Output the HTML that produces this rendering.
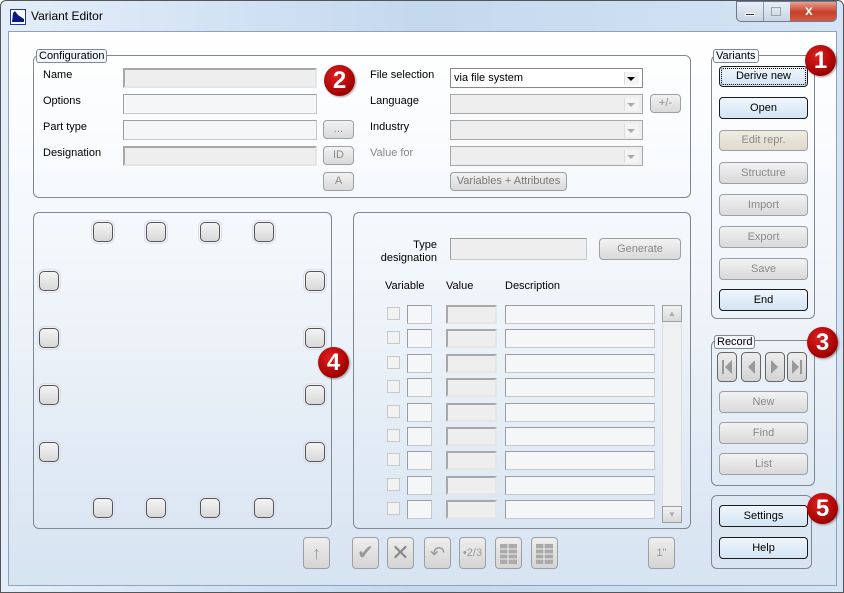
<!DOCTYPE html>
<html><head><meta charset="utf-8"><style>
*{box-sizing:border-box;margin:0;padding:0}
body{width:844px;height:593px;overflow:hidden;font-family:"Liberation Sans",sans-serif;font-size:11px;color:#000;background:#fff;position:relative}
.a{position:absolute}
#frame{left:0;top:0;width:844px;height:593px;background:linear-gradient(90deg,#e4eefa,#c4d8ee 50%,#d4e4f4);border:1px solid #555;border-radius:6px 6px 0 0}
#client{left:8px;top:31px;width:829px;height:555px;border:1px solid #8ea2bb;background:linear-gradient(#ffffff 0%,#f3f7fb 40%,#d6e3f1 100%)}
.grp{position:absolute;border:1px solid #7f8790;border-radius:6px}
.lg{position:absolute;background:#f4f7fb;border:1px solid #7f8790;border-radius:3px;padding:0 2px;font-size:11px;line-height:12px}
.lbl{position:absolute;font-size:11px}
.in{position:absolute;height:20px;border:1px solid #c4c8cc;border-top-color:#9a9ea3;border-left-color:#9a9ea3;background:#f4f6f8}
.ing{background:#eeeeee;border:2px solid #a8a8a8;border-right-color:#e6e6e6;border-bottom-color:#e6e6e6}
.btn{position:absolute;border:1px solid #9aa0a6;border-radius:4px;background:linear-gradient(#f2f2f2,#d9d9d9);color:#8a8a8a;text-align:center;font-size:11px}
.btna{border-color:#1a1a1a;background:linear-gradient(#f0f6fc,#d3e4f4);color:#000}
.sel{position:absolute;height:20px;border:1px solid #a8a8a8;background:#eeeeee}
.sel:after{content:"";position:absolute;right:3px;top:3px;width:14px;height:13px;background:#f4f4f4;border-left:1px solid #ddd}
.sel i{position:absolute;right:7px;top:8px;width:0;height:0;border-left:4px solid transparent;border-right:4px solid transparent;border-top:4px solid #aaa;z-index:2}
.badge{position:absolute;width:31px;height:31px;border-radius:50%;background:radial-gradient(circle at 40% 35%,#e02020,#a00000 70%,#700000);color:#fff;font-weight:bold;font-size:24px;text-align:center;line-height:31px;box-shadow:1px 1px 2px rgba(0,0,0,.4)}
.sq{position:absolute;width:20px;height:20px;border:1px solid #555;border-radius:5px;background:linear-gradient(#f4f4f4,#d8d8d8);outline:1px solid #dde;outline-offset:1px}
.cb{position:absolute;width:13px;height:13px;border:1px solid #c8c8c8;background:#f2f2f2}
.tb{position:absolute;width:27px;height:32px;border:1px solid #9aa0a6;border-radius:4px;background:linear-gradient(#eeeeee,#d4d4d4);color:#9a9a9a;text-align:center;font-size:12px;line-height:30px}
</style></head><body>
<div id="frame" class="a"></div>
<svg class="a" style="left:10px;top:9px" width="16" height="16"><rect x="0.5" y="0.5" width="15" height="15" fill="#fff" stroke="#1a3aa0"/><path d="M2 13 L14 13 L14 10 L8 6 L5 2 L3 4 Z" fill="#0a1a80"/></svg>
<div class="a" style="left:31px;top:9px;font-size:12px">Variant Editor</div>
<div class="a" style="left:736px;top:1px;width:101px;height:21px;border:1px solid #6b7a90;border-radius:0 0 5px 5px;background:linear-gradient(#e8eef6,#c8d4e4);overflow:hidden">
<div class="a" style="left:26px;top:0;width:1px;height:20px;background:#8899aa"></div>
<div class="a" style="left:53px;top:0;width:47px;height:20px;background:linear-gradient(#e8a090,#c8402a 50%,#d0604a)"></div>
<div class="a" style="left:8px;top:11px;width:10px;height:3px;background:#333;border:1px solid #fff"></div>
<div class="a" style="left:34px;top:5px;width:10px;height:9px;border:1px solid #9aa"></div>
<div class="a" style="left:68px;top:0px;color:#fff;font-weight:bold;font-size:14px">x</div>
</div>
<div id="client" class="a"></div>

<div class="grp" style="left:33px;top:55px;width:658px;height:143px"></div>
<div class="lg" style="left:36px;top:49px">Configuration</div>
<div class="lbl" style="left:43px;top:69px">Name</div>
<div class="lbl" style="left:43px;top:95px">Options</div>
<div class="lbl" style="left:43px;top:121px">Part type</div>
<div class="lbl" style="left:43px;top:147px">Designation</div>
<div class="in ing" style="left:123px;top:68px;width:194px"></div>
<div class="in" style="left:123px;top:94px;width:194px"></div>
<div class="in" style="left:123px;top:120px;width:194px"></div>
<div class="in ing" style="left:123px;top:146px;width:194px"></div>
<div class="btn" style="left:323px;top:120px;width:31px;height:19px;line-height:17px">...</div>
<div class="btn" style="left:323px;top:146px;width:31px;height:19px;line-height:17px">ID</div>
<div class="btn" style="left:323px;top:172px;width:31px;height:19px;line-height:17px">A</div>
<div class="badge" style="left:324px;top:65px">2</div>
<div class="lbl" style="left:370px;top:69px">File selection</div>
<div class="lbl" style="left:370px;top:95px">Language</div>
<div class="lbl" style="left:370px;top:121px">Industry</div>
<div class="lbl" style="left:370px;top:147px;color:#888">Value for</div>
<div class="sel" style="left:450px;top:68px;width:193px;background:#fff;border-color:#888"><span class="a" style="left:3px;top:3px">via file system</span><i style="border-top-color:#000"></i></div>
<div class="sel" style="left:450px;top:94px;width:193px"><i></i></div>
<div class="sel" style="left:450px;top:120px;width:193px"><i></i></div>
<div class="sel" style="left:450px;top:146px;width:193px"><i></i></div>
<div class="btn" style="left:650px;top:94px;width:31px;height:19px;line-height:17px">+/-</div>
<div class="btn" style="left:450px;top:172px;width:117px;height:19px;line-height:17px;font-size:11px;color:#777">Variables + Attributes</div>

<div class="grp" style="left:711px;top:55px;width:104px;height:264px"></div>
<div class="lg" style="left:713px;top:49px">Variants</div>
<div class="btn btna" style="left:719px;top:66px;width:89px;height:21px;line-height:19px;outline:1px dotted #000;outline-offset:-3px">Derive new</div>
<div class="btn btna" style="left:719px;top:97px;width:89px;height:22px;line-height:20px">Open</div>
<div class="btn" style="left:719px;top:130px;width:89px;height:21px;line-height:19px;background:linear-gradient(#eeebe0,#dedacb)">Edit repr.</div>
<div class="btn" style="left:719px;top:162px;width:89px;height:22px;line-height:20px">Structure</div>
<div class="btn" style="left:719px;top:194px;width:89px;height:22px;line-height:20px">Import</div>
<div class="btn" style="left:719px;top:226px;width:89px;height:22px;line-height:20px">Export</div>
<div class="btn" style="left:719px;top:258px;width:89px;height:22px;line-height:20px">Save</div>
<div class="btn btna" style="left:719px;top:289px;width:89px;height:22px;line-height:20px">End</div>
<div class="badge" style="left:805px;top:45px">1</div>

<div class="grp" style="left:711px;top:340px;width:104px;height:146px"></div>
<div class="lg" style="left:714px;top:335px">Record</div>
<svg class="a" style="left:716px;top:351px" width="93" height="33">
<defs><linearGradient id="g" x1="0" y1="0" x2="0" y2="1"><stop offset="0" stop-color="#eee"/><stop offset="1" stop-color="#d2d2d2"/></linearGradient></defs>
<g fill="url(#g)" stroke="#666"><rect x="1.5" y="1.5" width="19" height="29" rx="4"/><rect x="25.5" y="1.5" width="19" height="29" rx="4"/><rect x="49.5" y="1.5" width="19" height="29" rx="4"/><rect x="71.5" y="1.5" width="19" height="29" rx="4"/></g>
<g fill="#999"><rect x="6" y="9" width="2" height="14"/><path d="M16 9 L9 16 L16 23Z"/><path d="M39 9 L32 16 L39 23Z"/><path d="M55 9 L62 16 L55 23Z"/><path d="M76 9 L83 16 L76 23Z"/><rect x="84" y="9" width="2" height="14"/></g></svg>
<div class="btn" style="left:719px;top:391px;width:89px;height:22px;line-height:20px">New</div>
<div class="btn" style="left:719px;top:422px;width:89px;height:22px;line-height:20px">Find</div>
<div class="btn" style="left:719px;top:453px;width:89px;height:22px;line-height:20px">List</div>
<div class="badge" style="left:807px;top:327px">3</div>

<div class="grp" style="left:711px;top:495px;width:101px;height:74px"></div>
<div class="btn btna" style="left:719px;top:505px;width:89px;height:22px;line-height:20px">Settings</div>
<div class="btn btna" style="left:719px;top:537px;width:89px;height:22px;line-height:20px">Help</div>
<div class="badge" style="left:807px;top:493px">5</div>

<div class="grp" style="left:33px;top:212px;width:299px;height:317px"></div>
<div class="sq" style="left:93px;top:222px"></div><div class="sq" style="left:146px;top:222px"></div><div class="sq" style="left:200px;top:222px"></div><div class="sq" style="left:254px;top:222px"></div>
<div class="sq" style="left:93px;top:498px"></div><div class="sq" style="left:146px;top:498px"></div><div class="sq" style="left:200px;top:498px"></div><div class="sq" style="left:254px;top:498px"></div>
<div class="sq" style="left:39px;top:271px"></div><div class="sq" style="left:39px;top:328px"></div><div class="sq" style="left:39px;top:385px"></div><div class="sq" style="left:39px;top:442px"></div>
<div class="sq" style="left:305px;top:271px"></div><div class="sq" style="left:305px;top:328px"></div><div class="sq" style="left:305px;top:385px"></div><div class="sq" style="left:305px;top:442px"></div>
<div class="badge" style="left:318px;top:347px">4</div>

<div class="grp" style="left:353px;top:212px;width:338px;height:317px"></div>
<div class="lbl" style="left:370px;top:239px;width:67px;text-align:right;line-height:13px">Type<br>designation</div>
<div class="in" style="left:450px;top:238px;width:137px;height:22px;background:#eeeeee"></div>
<div class="btn" style="left:599px;top:238px;width:82px;height:22px;line-height:20px">Generate</div>
<div class="lbl" style="left:385px;top:280px">Variable</div>
<div class="lbl" style="left:446px;top:280px">Value</div>
<div class="lbl" style="left:505px;top:280px">Description</div>
<div class="a" style="left:662px;top:305px;width:20px;height:218px;background:#eef0f2;border:1px solid #ddd"></div>
<div class="btn" style="left:662px;top:305px;width:20px;height:17px;border-radius:0;color:#aaa;font-size:8px;line-height:15px">▲</div>
<div class="btn" style="left:662px;top:506px;width:20px;height:17px;border-radius:0;color:#aaa;font-size:8px;line-height:15px">▼</div>

<div class="tb" style="left:303px;top:537px;font-size:18px">↑</div>
<div class="tb" style="left:352px;top:537px;font-size:20px">✔</div>
<div class="tb" style="left:387px;top:537px;font-size:22px;color:#888">✕</div>
<div class="tb" style="left:424px;top:537px;font-size:18px">↶</div>
<div class="tb" style="left:459px;top:537px;font-size:11px">•2/3</div>
<div class="tb" style="left:495px;top:537px"><svg width="25" height="30"><g fill="#aaa"><rect x="4" y="6" width="17" height="20"/></g><g stroke="#eee"><line x1="4" y1="11" x2="21" y2="11"/><line x1="4" y1="16" x2="21" y2="16"/><line x1="4" y1="21" x2="21" y2="21"/><line x1="12" y1="6" x2="12" y2="26"/></g></svg></div>
<div class="tb" style="left:531px;top:537px"><svg width="25" height="30"><g fill="#aaa"><rect x="4" y="6" width="17" height="20"/></g><g stroke="#eee"><line x1="4" y1="11" x2="21" y2="11"/><line x1="4" y1="16" x2="21" y2="16"/><line x1="4" y1="21" x2="21" y2="21"/><line x1="12" y1="6" x2="12" y2="26"/></g></svg></div>
<div class="tb" style="left:648px;top:537px;font-size:11px">1"</div>

<div class="a" style="left:387px;top:305px"><div class="cb" style="left:0;top:2px"></div><div class="in" style="left:20px;top:0;width:25px;height:19px"></div><div class="in ing" style="left:59px;top:0;width:51px;height:19px"></div><div class="in" style="left:118px;top:0;width:150px;height:19px"></div></div>
<div class="a" style="left:387px;top:329px"><div class="cb" style="left:0;top:2px"></div><div class="in" style="left:20px;top:0;width:25px;height:19px"></div><div class="in ing" style="left:59px;top:0;width:51px;height:19px"></div><div class="in" style="left:118px;top:0;width:150px;height:19px"></div></div>
<div class="a" style="left:387px;top:354px"><div class="cb" style="left:0;top:2px"></div><div class="in" style="left:20px;top:0;width:25px;height:19px"></div><div class="in ing" style="left:59px;top:0;width:51px;height:19px"></div><div class="in" style="left:118px;top:0;width:150px;height:19px"></div></div>
<div class="a" style="left:387px;top:378px"><div class="cb" style="left:0;top:2px"></div><div class="in" style="left:20px;top:0;width:25px;height:19px"></div><div class="in ing" style="left:59px;top:0;width:51px;height:19px"></div><div class="in" style="left:118px;top:0;width:150px;height:19px"></div></div>
<div class="a" style="left:387px;top:403px"><div class="cb" style="left:0;top:2px"></div><div class="in" style="left:20px;top:0;width:25px;height:19px"></div><div class="in ing" style="left:59px;top:0;width:51px;height:19px"></div><div class="in" style="left:118px;top:0;width:150px;height:19px"></div></div>
<div class="a" style="left:387px;top:427px"><div class="cb" style="left:0;top:2px"></div><div class="in" style="left:20px;top:0;width:25px;height:19px"></div><div class="in ing" style="left:59px;top:0;width:51px;height:19px"></div><div class="in" style="left:118px;top:0;width:150px;height:19px"></div></div>
<div class="a" style="left:387px;top:451px"><div class="cb" style="left:0;top:2px"></div><div class="in" style="left:20px;top:0;width:25px;height:19px"></div><div class="in ing" style="left:59px;top:0;width:51px;height:19px"></div><div class="in" style="left:118px;top:0;width:150px;height:19px"></div></div>
<div class="a" style="left:387px;top:476px"><div class="cb" style="left:0;top:2px"></div><div class="in" style="left:20px;top:0;width:25px;height:19px"></div><div class="in ing" style="left:59px;top:0;width:51px;height:19px"></div><div class="in" style="left:118px;top:0;width:150px;height:19px"></div></div>
<div class="a" style="left:387px;top:500px"><div class="cb" style="left:0;top:2px"></div><div class="in" style="left:20px;top:0;width:25px;height:19px"></div><div class="in ing" style="left:59px;top:0;width:51px;height:19px"></div><div class="in" style="left:118px;top:0;width:150px;height:19px"></div></div>
</body></html>
